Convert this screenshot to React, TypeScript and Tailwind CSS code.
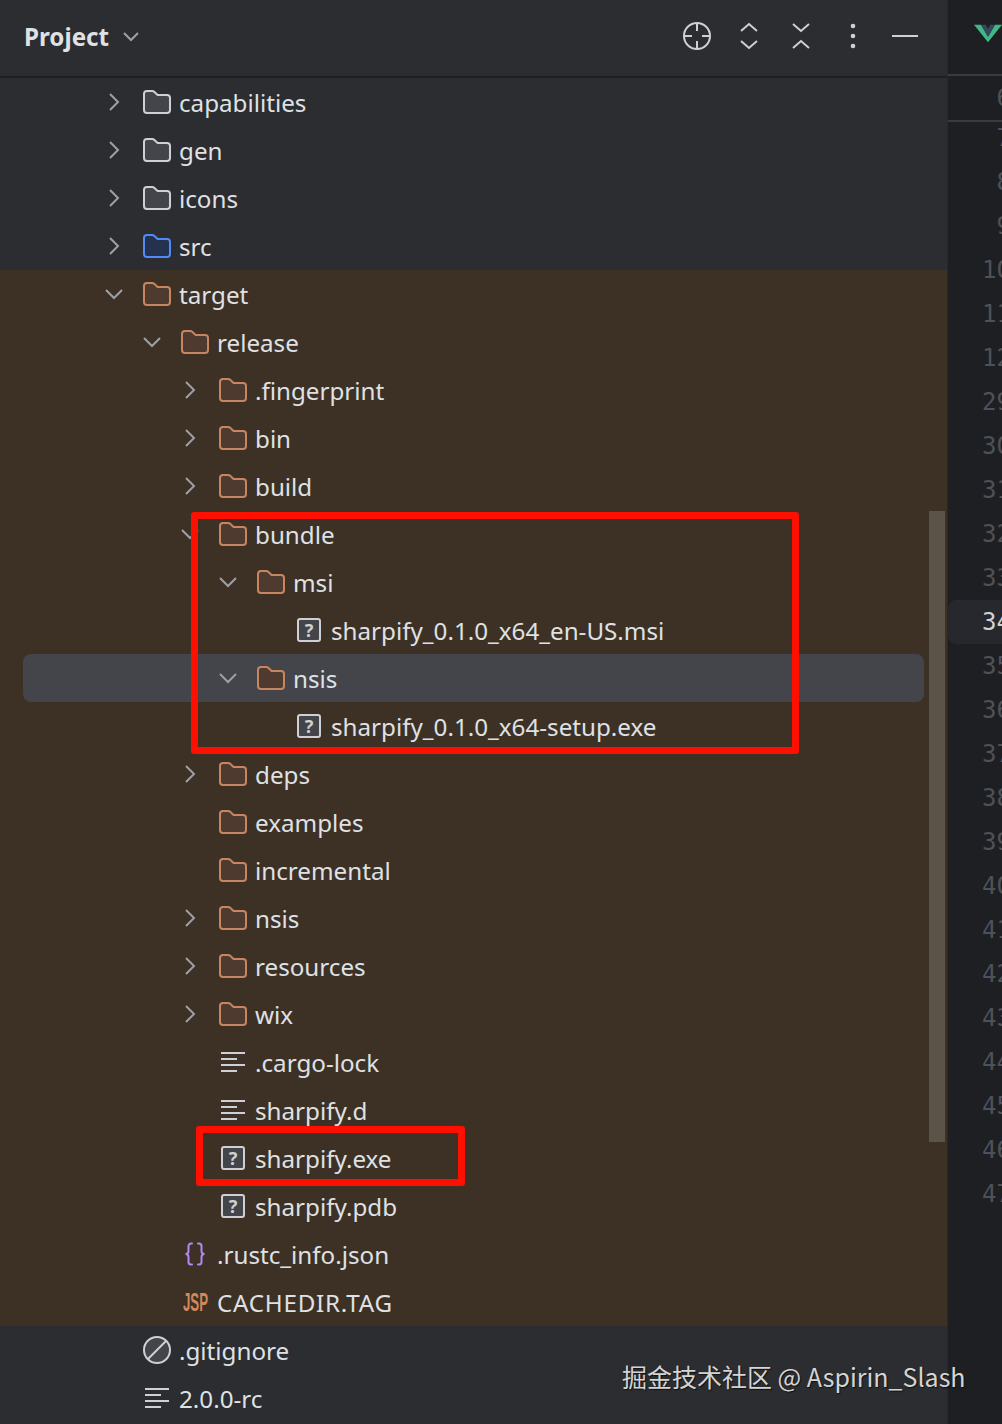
type Kind = "folder" | "question" | "lines" | "json" | "jsp" | "ignore";
type Tone = "plain" | "blue" | "brown";

interface Node {
  name: string;
  level: number;
  kind: Kind;
  open?: boolean;
  closed?: boolean;
  tone: Tone;
  selected?: boolean;
}

const tree: Node[] = [
  { name: "capabilities", level: 0, kind: "folder", closed: true, tone: "plain" },
  { name: "gen", level: 0, kind: "folder", closed: true, tone: "plain" },
  { name: "icons", level: 0, kind: "folder", closed: true, tone: "plain" },
  { name: "src", level: 0, kind: "folder", closed: true, tone: "blue" },
  { name: "target", level: 0, kind: "folder", open: true, tone: "brown" },
  { name: "release", level: 1, kind: "folder", open: true, tone: "brown" },
  { name: ".fingerprint", level: 2, kind: "folder", closed: true, tone: "brown" },
  { name: "bin", level: 2, kind: "folder", closed: true, tone: "brown" },
  { name: "build", level: 2, kind: "folder", closed: true, tone: "brown" },
  { name: "bundle", level: 2, kind: "folder", open: true, tone: "brown" },
  { name: "msi", level: 3, kind: "folder", open: true, tone: "brown" },
  { name: "sharpify_0.1.0_x64_en-US.msi", level: 4, kind: "question", tone: "brown" },
  { name: "nsis", level: 3, kind: "folder", open: true, tone: "brown", selected: true },
  { name: "sharpify_0.1.0_x64-setup.exe", level: 4, kind: "question", tone: "brown" },
  { name: "deps", level: 2, kind: "folder", closed: true, tone: "brown" },
  { name: "examples", level: 2, kind: "folder", tone: "brown" },
  { name: "incremental", level: 2, kind: "folder", tone: "brown" },
  { name: "nsis", level: 2, kind: "folder", closed: true, tone: "brown" },
  { name: "resources", level: 2, kind: "folder", closed: true, tone: "brown" },
  { name: "wix", level: 2, kind: "folder", closed: true, tone: "brown" },
  { name: ".cargo-lock", level: 2, kind: "lines", tone: "brown" },
  { name: "sharpify.d", level: 2, kind: "lines", tone: "brown" },
  { name: "sharpify.exe", level: 2, kind: "question", tone: "brown" },
  { name: "sharpify.pdb", level: 2, kind: "question", tone: "brown" },
  { name: ".rustc_info.json", level: 1, kind: "json", tone: "brown" },
  { name: "CACHEDIR.TAG", level: 1, kind: "jsp", tone: "brown" },
  { name: ".gitignore", level: 0, kind: "ignore", tone: "plain" },
  { name: "2.0.0-rc", level: 0, kind: "lines", tone: "plain" },
];

const gutterLines = [7, 8, 9, 10, 11, 12, 29, 30, 31, 32, 33, 34, 35, 36, 37, 38, 39, 40, 41, 42, 43, 44, 45, 46, 47];

function FolderIcon({ tone }: { tone: Tone }) {
  const colors = {
    plain: { fill: "#43454a", stroke: "#ced0d6" },
    blue: { fill: "#25324d", stroke: "#548af7" },
    brown: { fill: "#4f3a2f", stroke: "#c7865f" },
  }[tone];
  return (
    <svg width="28" height="24" viewBox="0 0 28 24" fill={colors.fill} stroke={colors.stroke} strokeWidth="2">
      <path d="M1 4a3 3 0 0 1 3-3h5.2a3 3 0 0 1 2 .8L14.6 5H24a3 3 0 0 1 3 3v12a3 3 0 0 1-3 3H4a3 3 0 0 1-3-3z" />
    </svg>
  );
}

function FileIcon({ kind }: { kind: Kind }) {
  if (kind === "question") {
    return (
      <div className="ml-[2px] flex h-[24px] w-[24px] items-center justify-center rounded-[3px] border-2 border-[#ced0d6] bg-[#43454a] text-[18px] leading-none font-bold text-[#ced0d6]">
        ?
      </div>
    );
  }
  if (kind === "lines") {
    return (
      <svg className="ml-[2px]" width="24" height="20" viewBox="0 0 24 20" stroke="#ced0d6" strokeWidth="2">
        <path d="M0 1h24M0 7h16M0 13h24M0 19h16" />
      </svg>
    );
  }
  if (kind === "json") {
    return (
      <svg className="ml-[2px]" width="24" height="24" viewBox="0 0 24 24" fill="none" stroke="#b189f5" strokeWidth="2" strokeLinecap="round">
        <path d="M9 1.500H8a2.500 2.500 0 0 0-2.500 2.500v5A3 3 0 0 1 2.500 12a3 3 0 0 1 3 3v5A2.500 2.500 0 0 0 8 22.500h1" />
        <path d="M15 1.500h1A2.500 2.500 0 0 1 18.500 4v5a3 3 0 0 0 3 3 3 3 0 0 0-3 3v5a2.500 2.500 0 0 1-2.500 2.500h-1" />
      </svg>
    );
  }
  if (kind === "jsp") {
    return (
      <div className="ml-[2px] w-[24px] origin-left scale-x-[0.51] font-['Liberation_Sans',sans-serif] text-[26px] leading-none font-bold whitespace-nowrap text-[#d0885c]">
        JSP
      </div>
    );
  }
  return (
    <svg width="28" height="28" viewBox="0 0 28 28" fill="#43454a" stroke="#ced0d6" strokeWidth="2">
      <circle cx="14" cy="14" r="13" />
      <path d="M5 23 23 5" />
    </svg>
  );
}

function Chevron({ open }: { open?: boolean }) {
  return (
    <svg width="18" height="18" viewBox="0 0 18 18" fill="none" stroke="#9da0a8" strokeWidth="2">
      {open ? <path d="M1 5l8 8 8-8" /> : <path d="M5 1l8 8-8 8" />}
    </svg>
  );
}

function TreeRow({ node }: { node: Node }) {
  return (
    <div className={node.tone === "brown" ? "bg-[#3d3125]" : "bg-[#2b2d30]"}>
      <div
        className={`mx-[23px] flex h-[48px] items-center overflow-hidden ${node.selected ? "rounded-lg bg-[#43454a]" : ""}`}
        style={{ paddingLeft: 82 + node.level * 38 }}
      >
        <div className="flex w-[38px] shrink-0 items-center">
          {(node.open || node.closed) && <Chevron open={node.open} />}
        </div>
        <div className="flex w-[36px] shrink-0 items-center">
          {node.kind === "folder" ? <FolderIcon tone={node.tone} /> : <FileIcon kind={node.kind} />}
        </div>
        <span className={`pt-[2px] text-[24.200px] whitespace-nowrap text-[#dfe1e5] ${node.kind === "jsp" ? "tracking-[0.75px]" : ""}`}>
          {node.name}
        </span>
      </div>
    </div>
  );
}

function HeaderIcons() {
  return (
    <div className="flex items-center pr-[16px]">
      <div className="flex w-[52px] justify-center">
        <svg width="28" height="28" viewBox="0 0 28 28" fill="none" stroke="#ced0d6" strokeWidth="2">
          <circle cx="14" cy="14" r="13" />
          <path d="M14 1v8M14 19v8M1 14h8M19 14h8" />
        </svg>
      </div>
      <div className="flex w-[52px] justify-center">
        <svg width="18" height="28" viewBox="0 0 18 28" fill="none" stroke="#ced0d6" strokeWidth="2">
          <path d="M1 9l8-7 8 7M1 19l8 7 8-7" />
        </svg>
      </div>
      <div className="flex w-[52px] justify-center">
        <svg width="18" height="28" viewBox="0 0 18 28" fill="none" stroke="#ced0d6" strokeWidth="2">
          <path d="M1 2l8 7 8-7M1 26l8-7 8 7" />
        </svg>
      </div>
      <div className="flex w-[52px] justify-center">
        <svg width="6" height="26" viewBox="0 0 6 26" fill="#ced0d6">
          <circle cx="3" cy="3" r="2.300" />
          <circle cx="3" cy="13" r="2.300" />
          <circle cx="3" cy="23" r="2.300" />
        </svg>
      </div>
      <div className="flex w-[52px] justify-center">
        <div className="h-[2px] w-[26px] bg-[#ced0d6]" />
      </div>
    </div>
  );
}

export default function App() {
  return (
    <div className="relative flex h-[1424px] w-[1002px] overflow-hidden bg-[#1e1f22] font-['Noto_Sans',sans-serif]">
      <div className="relative w-[947px] shrink-0 bg-[#2b2d30]">
        <div className="flex h-[78px] items-center justify-between border-b-2 border-[#1e1f22] pb-[5px]">
          <div className="flex items-center gap-[14px] pt-[3px] pl-[24px]">
            <span className="text-[24.200px] font-bold text-[#dfe1e5]">Project</span>
            <svg width="16" height="10" viewBox="0 0 16 10" fill="none" stroke="#9da0a8" strokeWidth="2">
              <path d="M1 1l7 7 7-7" />
            </svg>
          </div>
          <HeaderIcons />
        </div>
        <div>
          {tree.map((node, i) => (
            <TreeRow key={i} node={node} />
          ))}
        </div>
        {/* scrollbar */}
        <div className="absolute top-[511px] left-[929px] h-[631px] w-[16px] bg-[#5b5348]" />
      </div>

      <div className="flex min-w-0 flex-1 flex-col border-l border-[#26282b] font-['DejaVu_Sans_Mono',monospace] text-[24px] text-[#4e5157]">
        <div className="flex h-[74px] shrink-0 items-start overflow-hidden pt-[21px] pl-[26px]">
          <svg width="40" height="25" viewBox="0 0 40 25">
            <path d="M0 0h10l10 17L30 0h10L20 25z" fill="#41b883" />
            <path d="M10 0h7l3 6 3-6h7L20 17z" fill="#35495e" />
          </svg>
        </div>
        <div className="flex h-[48px] shrink-0 items-center justify-end border-y-2 border-[#393b40]">
          <span className="-mr-[9px] w-[30px] text-right">6</span>
        </div>
        <div className="min-h-0 flex-1 overflow-hidden">
          <div className="-mt-[6px]">
            {gutterLines.map((n) => (
              <div
                key={n}
                className={`flex h-[44px] items-center justify-end ${n === 34 ? "rounded-l-lg bg-[#26282e] text-[#ced0d6]" : ""}`}
              >
                <span className="-mr-[9px] w-[30px] text-right">{n}</span>
              </div>
            ))}
          </div>
        </div>
      </div>

      {/* red annotation boxes */}
      <div className="pointer-events-none absolute top-[512px] left-[191px] h-[242px] w-[608px] rounded-[3px] border-[7px] border-[#fe1000]" />
      <div className="pointer-events-none absolute top-[1126px] left-[196px] h-[60px] w-[269px] rounded-[3px] border-[7px] border-[#fe1000]" />

      {/* watermark */}
      <div className="absolute top-[1357px] left-[622px] font-['Noto_Sans_CJK_SC',sans-serif] text-[25px] leading-[38px] whitespace-nowrap text-[#d4d4d4] [text-shadow:1px_1px_1px_#111]">
        掘金技术社区 @ Aspirin_Slash
      </div>
    </div>
  );
}
